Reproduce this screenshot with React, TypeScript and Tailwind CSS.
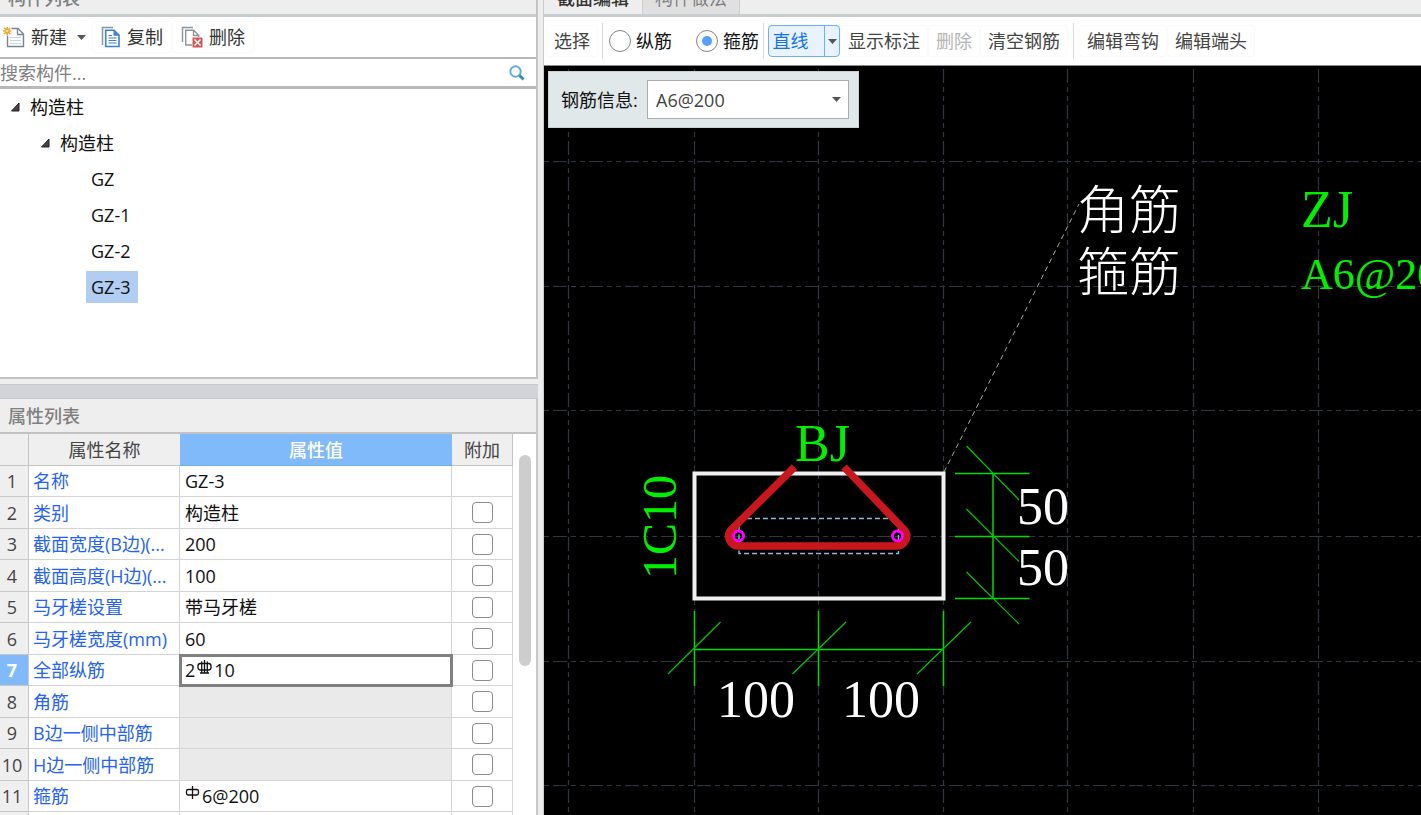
import React from "react";

const SANS = "font-['Open_Sans','Noto_Sans_CJK_SC',sans-serif]";

function CaretDown() {
  return (
    <svg width="9" height="5" viewBox="0 0 9 5" aria-hidden="true" className="shrink-0">
      <path d="M0 0h9L4.5 5z" fill="#555" />
    </svg>
  );
}

function NewIcon() {
  return (
    <svg width="22" height="22" viewBox="0 0 22 22" fill="none" aria-hidden="true">
      <path d="M4.5 2.500h10.500l5.500 5.500v12.500h-16z" fill="#fff" stroke="#7b8790" strokeWidth="1.400" />
      <path d="M14.500 2.500v6h6" stroke="#7b8790" strokeWidth="1.300" />
      <path d="M7 11.500h11M7 14.500h11M7 17.500h11" stroke="#cfd4d8" strokeWidth="1.200" />
      <path d="M0 1h8.500v8.500H0z" fill="#fff" />
      <path d="M4.200 1v8M.2 5h8M1.200 2l6 6M7.200 2l-6 6" stroke="#f5a02a" strokeWidth="1.700" />
      <circle cx="4.200" cy="5" r="1.200" fill="#fff3c4" />
    </svg>
  );
}

function CopyIcon() {
  return (
    <svg width="20" height="22" viewBox="0 0 20 22" fill="none" aria-hidden="true">
      <path d="M1.500 19V1.500H12" stroke="#8a949b" strokeWidth="1.500" />
      <path d="M4.700 4.200h8.300l5 5v11.300H4.700z" fill="#fff" stroke="#3b82cf" strokeWidth="1.600" />
      <path d="M12.500 4.500v5.300h5.300z" fill="#3b82cf" />
      <path d="M7.500 9.500h3.500M7.500 12h8M7.500 14.500h8M7.500 17h8" stroke="#3b82cf" strokeWidth="1.200" />
    </svg>
  );
}

function DeleteIcon() {
  return (
    <svg width="22" height="22" viewBox="0 0 22 22" fill="none" aria-hidden="true">
      <path d="M1.500 16V1.500H12" stroke="#8a949b" strokeWidth="1.400" />
      <path d="M11 19H4.700V4.200h8l5 5V11M12.500 4.500v5h5" stroke="#8a949b" strokeWidth="1.400" />
      <path d="M11.500 11.500h10v10h-10z" fill="#d0565c" />
      <path d="M13.500 13.500l6 6M19.500 13.500l-6 6" stroke="#fff" strokeWidth="1.500" />
    </svg>
  );
}

function SearchIcon() {
  return (
    <svg width="16" height="16" viewBox="0 0 16 16" fill="none" aria-hidden="true">
      <circle cx="6.500" cy="6.500" r="5.200" stroke="#5fabd3" strokeWidth="1.900" />
      <path d="M10.500 10.500l4 4" stroke="#2f8cc0" strokeWidth="2.800" />
    </svg>
  );
}

function RebarMark({ grade }: { grade: 1 | 3 }) {
  return (
    <svg width="15" height="15" viewBox="0 0 15 15" fill="none" stroke="#111" strokeWidth="1.300" aria-hidden="true" className="mb-1.5">
      {grade === 3 ? (
        <>
          <rect x="1" y="3.500" width="13" height="6.500" rx="2.500" />
          <path d="M4.700 1.500v11M7.500 0v13M10.300 1.500v11M3 13h9" />
        </>
      ) : (
        <>
          <rect x="1.500" y="3.500" width="12" height="5.500" rx="1.800" />
          <path d="M7.500 0v13" />
        </>
      )}
    </svg>
  );
}

function TreeBranch({ label, className }: { label: string; className: string }) {
  return (
    <button type="button" className={`flex h-9 w-full items-center gap-2.5 ${className}`}>
      <svg width="10" height="10" viewBox="0 0 10 10" aria-hidden="true">
        <path d="M9 1v8H1.500z" fill="#444" stroke="#222" />
      </svg>
      {label}
    </button>
  );
}

const rows: { name: string; value: React.ReactNode; check?: boolean; locked?: boolean; active?: boolean }[] = [
  { name: "名称", value: "GZ-3" },
  { name: "类别", value: "构造柱", check: true },
  { name: "截面宽度(B边)(...", value: "200", check: true },
  { name: "截面高度(H边)(...", value: "100", check: true },
  { name: "马牙槎设置", value: "带马牙槎", check: true },
  { name: "马牙槎宽度(mm)", value: "60", check: true },
  {
    name: "全部纵筋",
    value: (
      <span className="flex items-center gap-0.5">
        2<RebarMark grade={3} />10
      </span>
    ),
    check: true,
    active: true,
  },
  { name: "角筋", value: "", check: true, locked: true },
  { name: "B边一侧中部筋", value: "", check: true, locked: true },
  { name: "H边一侧中部筋", value: "", check: true, locked: true },
  {
    name: "箍筋",
    value: (
      <span className="flex items-center gap-0.5">
        <RebarMark grade={1} />6@200
      </span>
    ),
    check: true,
  },
];

function PropertyTable() {
  return (
    <table className="w-[513px] shrink-0 table-fixed border-separate border-spacing-0 self-start">
      <colgroup>
        <col className="w-[29px]" />
        <col className="w-[151px]" />
        <col className="w-[272px]" />
        <col className="w-[61px]" />
      </colgroup>
      <thead>
        <tr className="h-8 bg-[#efefef] text-[#444]">
          <th className="border-r border-b border-[#c4c4c4] p-0" />
          <th className="border-b border-[#c4c4c4] p-0 font-normal">属性名称</th>
          <th className="border-b border-[#6aaeee] bg-[#80bafb] p-0 font-medium text-white">属性值</th>
          <th className="border-r border-b border-[#c4c4c4] p-0 font-normal">附加</th>
        </tr>
      </thead>
      <tbody>
        {rows.map((r, i) => (
          <tr key={r.name} className="h-[31px] even:h-8">
            <th
              scope="row"
              className={`border-r border-b border-[#c8c8c8] p-0 pr-1 text-center ${
                r.active ? "bg-[#80bafb] font-bold text-white" : "bg-[#efefef] font-normal text-[#444]"
              }`}
            >
              {i + 1}
            </th>
            <td className="overflow-hidden border-r border-b border-[#d4d4d4] p-0 pl-1 whitespace-nowrap text-[#2563f5]">{r.name}</td>
            <td
              className={`border-r border-b border-[#d4d4d4] p-0 pl-[5px] ${r.locked ? "bg-[#eaeaea]" : ""} ${
                r.active ? "outline-[3px] -outline-offset-2 outline-[#808080]" : ""
              }`}
            >
              {r.value}
            </td>
            <td className="border-r border-b border-[#d4d4d4] p-0">
              {r.check && (
                <input
                  type="checkbox"
                  aria-label={`附加 ${r.name}`}
                  className="mx-auto block h-[21px] w-[21px] appearance-none rounded border border-[#8c8c8c] bg-white checked:bg-[#80bafb]"
                />
              )}
            </td>
          </tr>
        ))}
        <tr className="h-[31px]">
          <th className="border-r border-[#c8c8c8] bg-[#efefef]" />
          <td className="border-r border-[#d4d4d4]" />
          <td className="border-r border-[#d4d4d4]" />
          <td className="border-r border-[#d4d4d4]" />
        </tr>
      </tbody>
    </table>
  );
}

const gridX = [24.5, 150.5, 274.5, 399.5, 523.5, 649.5, 774.5, 899.5, 1024.5, 1149.5, 1274.5, 1399.5, 1524.5];
const gridY = [95.5, 220.5, 344.5, 470.5, 595.5, 719.5, 844.5, 969.5, 1094.5];

function SectionDrawing() {
  return (
    <svg className="block h-full w-full bg-black font-['Liberation_Serif','Noto_Sans_CJK_SC',serif]" role="img" aria-label="截面">
      <g stroke="#303542" strokeWidth="1.200" strokeDasharray="14 4 5 4 5 4">
        {gridX.map((x) => (
          <line key={x} x1={x} x2={x} y1="0" y2="1200" strokeDashoffset="33" />
        ))}
        {gridY.map((y) => (
          <line key={y} x1="0" x2="1700" y1={y} y2={y} strokeDashoffset="27" />
        ))}
      </g>
      <path d="M400 406L535 138" stroke="#a8a8a0" strokeDasharray="5 4" />
      <rect x="150.500" y="407.500" width="249" height="125" fill="none" stroke="#f0f0f0" strokeWidth="4" />
      <rect x="195" y="452.500" width="159.500" height="35" fill="none" stroke="#8fb4d8" strokeWidth="1.400" strokeDasharray="5 3" />
      <path
        d="M250.500 401L187.500 463.500A9.700 9.700 0 0 0 194.500 480H352.500A9.800 9.800 0 0 0 360 463.500L300 401"
        fill="none"
        stroke="#c9171e"
        strokeWidth="7.500"
      />
      <g fill="none" stroke="#ff00ff" strokeWidth="3">
        <circle cx="194.500" cy="470" r="5" />
        <circle cx="353.500" cy="470" r="5" />
      </g>
      <g stroke="#00dc00" strokeWidth="1.500" fill="none">
        <path d="M449 407.500V532.500M411 407.500H485.500M411 470.500H485.500M411 532.500H485.500" />
        <path d="M150.500 583.500H399.500M150.500 545V620M274.500 545V620M399.500 545V620" />
      </g>
      <g stroke="#00c800" strokeWidth="1.200" fill="none">
        <path d="M422.500 380L475 434M422.500 443L475 495.500M422.500 506L475 558" />
        <path d="M124 608L176.500 556M248.500 608L302 556M373 608L427 556" />
      </g>
      <g fill="#fff" fontSize="52">
        <text x="533" y="163" fontWeight="300">角筋</text>
        <text x="533" y="225" fontWeight="300">箍筋</text>
        <text x="473" y="458">50</text>
        <text x="473" y="519">50</text>
        <text x="173" y="651">100</text>
        <text x="298" y="651">100</text>
      </g>
      <g fill="#00f000" fontSize="52">
        <text x="757" y="161">ZJ</text>
        <text x="757" y="223" fontSize="44">A6@200</text>
        <text x="251" y="395">BJ</text>
        <text transform="translate(132 513) rotate(-90)" fontSize="48">1C10</text>
      </g>
    </svg>
  );
}

function ToolButton({ children, disabled }: { children: string; disabled?: boolean }) {
  return (
    <button type="button" disabled={disabled} className="h-8 rounded border border-[#fafafa] px-[7px] text-[#444] disabled:text-[#b4b4b4]">
      {children}
    </button>
  );
}

function RadioOption({ label, checked }: { label: string; checked?: boolean }) {
  return (
    <label className="flex items-center gap-[5px] text-[#111]">
      <input
        type="radio"
        name="rebar"
        defaultChecked={checked}
        className="h-[22px] w-[22px] appearance-none rounded-full border border-[#858585] bg-white bg-clip-content p-[5px] checked:bg-[#55a0fa]"
      />
      {label}
    </label>
  );
}

export default function App() {
  return (
    <div className={`flex h-screen overflow-hidden bg-[#eeeeee] text-[18px] leading-6 text-[#111] ${SANS}`}>
      <aside className="flex w-[538px] shrink-0 flex-col">
        <section className="flex h-[379px] shrink-0 flex-col border-r-2 border-b-2 border-[#c4c4c4] bg-white">
          <header className="flex h-[17px] shrink-0 items-end overflow-hidden border-b-[3px] border-[#c8cdd0] bg-[#eeeeee] pl-2">
            <h2 className="h-8 leading-8 font-medium text-[#808080]">构件列表</h2>
          </header>
          <div className="flex h-10 shrink-0 items-center pl-[3px] text-[#333]">
            <button type="button" className="flex h-8 items-center gap-1.5">
              <NewIcon />
              新建
              <span className="pl-1">
                <CaretDown />
              </span>
            </button>
            <button type="button" className="ml-1.5 flex h-8 items-center gap-1.5 rounded border border-[#fafafa] px-2">
              <CopyIcon />
              复制
            </button>
            <button type="button" className="flex h-8 items-center gap-1.5 rounded border border-[#fafafa] px-2">
              <DeleteIcon />
              删除
            </button>
          </div>
          <label className="flex h-8 shrink-0 items-center border-t-2 border-b-[3px] border-[#b8b8b8] pr-[11px]">
            <input type="text" aria-label="搜索构件" placeholder="搜索构件..." className="min-w-0 flex-1 bg-transparent outline-none placeholder:text-[#808080]" />
            <SearchIcon />
          </label>
          <nav className="flex min-h-0 flex-1 flex-col items-start overflow-hidden">
            <TreeBranch label="构造柱" className="pl-2.5" />
            <TreeBranch label="构造柱" className="pl-10" />
            {["GZ", "GZ-1", "GZ-2", "GZ-3"].map((n) => (
              <div key={n} className="flex h-9 items-center pl-[86px]">
                <button type="button" className={`h-8 px-[5px] ${n === "GZ-3" ? "bg-[#b1cdf1] pr-2" : ""}`}>
                  {n}
                </button>
              </div>
            ))}
          </nav>
        </section>
        <div className="mt-[5px] h-[15px] shrink-0 border-y border-[#c6c9ce] bg-[#d2d4da]" />
        <section className="flex min-h-0 flex-1 flex-col border-r-2 border-[#c8c8c8]">
          <h2 className="flex h-[35px] shrink-0 items-center border-b-2 border-[#c2c2c2] pl-2 font-medium text-[#808080]">属性列表</h2>
          <div className="flex min-h-0 flex-1 overflow-hidden bg-white">
            <PropertyTable />
            <div className="flex flex-1 justify-center pt-[21px]">
              <div className="h-[211px] w-3 rounded-full bg-[#cdcdcd]" />
            </div>
          </div>
        </section>
      </aside>

      <main className="ml-[5px] flex min-w-0 flex-1 flex-col border-l border-[#c8cdd0]">
        <div className="flex h-[17px] shrink-0 items-end overflow-hidden border-b-[3px] border-[#c8cdd0]">
          <button type="button" className="h-8 px-[13px] leading-8 font-medium text-[#333]">
            截面编辑
          </button>
          <button type="button" className="h-8 border-x border-[#cfcfcf] bg-[#e0e0e0] px-3 leading-8 text-[#808080]">
            构件做法
          </button>
        </div>
        <div className="flex h-[49px] shrink-0 items-center overflow-hidden border-b border-[#8c8c8c] bg-white pl-0.5 whitespace-nowrap">
          <ToolButton>选择</ToolButton>
          <div className="mr-1.5 ml-1 h-9 w-px bg-[#d8d8d8]" />
          <RadioOption label="纵筋" />
          <div className="w-6" />
          <RadioOption label="箍筋" checked />
          <div className="mx-1 h-9 w-px bg-[#d8d8d8]" />
          <div className="flex h-8 rounded border border-[#6cb0fa] bg-[#e8f3ff]">
            <button type="button" className="w-[55px] pr-3 text-[#1673e6]">
              直线
            </button>
            <button type="button" aria-label="更多线型" className="flex w-[15px] items-center justify-center border-l border-[#6cb0fa]">
              <CaretDown />
            </button>
          </div>
          <ToolButton>显示标注</ToolButton>
          <ToolButton disabled>删除</ToolButton>
          <ToolButton>清空钢筋</ToolButton>
          <div className="mx-[5px] h-9 w-px bg-[#d8d8d8]" />
          <ToolButton>编辑弯钩</ToolButton>
          <ToolButton>编辑端头</ToolButton>
        </div>
        <div className="relative min-h-0 flex-1 overflow-hidden bg-black">
          <SectionDrawing />
          <div className="absolute top-[5px] left-1 flex h-[57px] w-[311px] items-center border border-[#c8d0d2] bg-[#e1e8ea] pl-3">
            <label htmlFor="rebar-info" className="w-[86px] text-[#111]">
              钢筋信息:
            </label>
            <div className="relative flex items-center">
              <select id="rebar-info" className="h-[39px] w-[202px] appearance-none border border-[#acacac] bg-white pl-2 text-[#444]">
                <option>A6@200</option>
              </select>
              <span className="pointer-events-none absolute right-2">
                <CaretDown />
              </span>
            </div>
          </div>
        </div>
      </main>
    </div>
  );
}
